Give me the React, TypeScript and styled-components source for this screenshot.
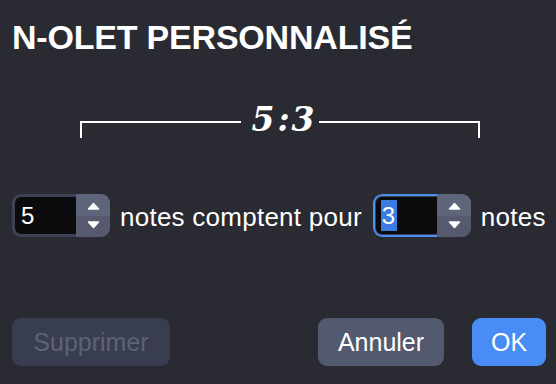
import React from "react";
import styled, { createGlobalStyle } from "styled-components";

const Global = createGlobalStyle`
  html, body { margin: 0; padding: 0; background: #2a2a32; }
  body { font-family: "Liberation Sans", Arial, sans-serif; color: #fff; }
`;

const Dialog = styled.div`
  width: 556px;
  height: 384px;
  box-sizing: border-box;
  padding: 18px 10px 0 12px;
  display: flex;
  flex-direction: column;
`;

const Title = styled.h1`
  margin: 0;
  font-size: 34px;
  line-height: 38px;
  font-weight: 700;
  letter-spacing: -0.2px;
  color: #fff;
`;

const Bracket = styled.div`
  margin: 46px 0 0 68px;
  width: 400px;
  display: flex;
  align-items: flex-start;
`;

const Segment = styled.div<{ $side: "left" | "right" }>`
  flex: 1;
  margin-top: 19px;
  height: 15px;
  border-top: 2px solid #fff;
  ${(p) => (p.$side === "left" ? "border-left: 2px solid #fff;" : "border-right: 2px solid #fff;")}
`;

const Ratio = styled.div`
  padding: 0 4px 0 10px;
  font-family: "DejaVu Serif", "Liberation Serif", serif;
  font-style: italic;
  font-weight: 700;
  font-size: 33px;
  line-height: 36px;
  display: flex;
`;

const Colon = styled.span`
  margin: 0 2px 0 3px;
`;

const Row = styled.div`
  margin-top: 56px;
  display: flex;
  align-items: center;
`;

const Label = styled.span<{ $gap: number }>`
  font-size: 26px;
  letter-spacing: 0.25px;
  line-height: 29px;
  padding-top: 4px;
  margin: 0 ${(p) => p.$gap}px 0 10px;
  color: #fff;
`;

const Spin = styled.div`
  width: 98px;
  height: 43px;
  box-sizing: border-box;
  border-radius: 9px;
  background: #3e4255;
  display: flex;
  overflow: hidden;
  flex-shrink: 0;
`;

const Field = styled.div<{ $focused?: boolean }>`
  width: 64px;
  height: 43px;
  box-sizing: border-box;
  border-radius: 9px 0 0 9px;
  border: 3px solid ${(p) => (p.$focused ? "#4d8ef0" : "#3e4255")};
  border-right: none;
  ${(p) => (p.$focused ? "border-width: 2px; padding: 1px 0 1px 1px; background: #3e4255;" : "")}
  display: flex;
`;

const FieldInner = styled.div`
  flex: 1;
  background: #0b0b0e;
  border-radius: 6px 0 0 6px;
  display: flex;
  align-items: center;
  padding-left: 6px;
  font-size: 24px;
  color: #fff;
`;

const Selected = styled.span`
  background: #3b7ce2;
  display: inline-block;
  line-height: 31px;
  padding: 0 2px 0 1px;
  margin-left: -1px;
`;

const Arrows = styled.div`
  flex: 1;
  display: flex;
  flex-direction: column;
`;

const ArrowCell = styled.div<{ $up?: boolean }>`
  flex: 1;
  display: flex;
  align-items: center;
  justify-content: center;
  background: ${(p) => (p.$up ? "#5e647a" : "#555a6f")};
  padding-left: 1px;
  ${(p) => (p.$up ? "padding-top: 2px;" : "padding-bottom: 2px;")}
`;

const Buttons = styled.div`
  margin-top: 81px;
  display: flex;
  align-items: center;
`;

const Spacer = styled.div`
  flex: 1;
`;

const Button = styled.button<{ $kind: "disabled" | "secondary" | "primary"; $w: number }>`
  width: ${(p) => p.$w}px;
  height: 48px;
  border: none;
  border-radius: 9px;
  font-family: "Liberation Sans", Arial, sans-serif;
  font-size: 25px;
  padding: 0;
  margin-left: ${(p) => (p.$kind === "primary" ? 28 : 0)}px;
  background: ${(p) =>
    p.$kind === "primary" ? "#4a8cf6" : p.$kind === "secondary" ? "#535a70" : "#393d50"};
  color: ${(p) => (p.$kind === "disabled" ? "#5d6275" : "#fff")};
`;

const Tri = ({ up }: { up?: boolean }) => (
  <svg width="13" height="8" viewBox="0 0 13 8">
    <path
      d={up ? "M1.5 7 L6.5 1.5 L11.5 7 Z" : "M1.5 1 L6.5 6.5 L11.5 1 Z"}
      fill="#fff"
      stroke="#fff"
      strokeWidth="1.5"
      strokeLinejoin="round"
    />
  </svg>
);

const SpinBox = ({ value, focused }: { value: string; focused?: boolean }) => (
  <Spin>
    <Field $focused={focused}>
      <FieldInner>{focused ? <Selected>{value}</Selected> : value}</FieldInner>
    </Field>
    <Arrows>
      <ArrowCell $up>
        <Tri up />
      </ArrowCell>
      <ArrowCell>
        <Tri />
      </ArrowCell>
    </Arrows>
  </Spin>
);

export default function App() {
  return (
    <>
      <Global />
      <Dialog>
        <Title>N-OLET PERSONNALISÉ</Title>
        <Bracket>
          <Segment $side="left" />
          <Ratio>
            <span>5</span>
            <Colon>:</Colon>
            <span>3</span>
          </Ratio>
          <Segment $side="right" />
        </Bracket>
        <Row>
          <SpinBox value="5" />
          <Label $gap={11}>notes comptent pour</Label>
          <SpinBox value="3" focused />
          <Label $gap={0}>notes</Label>
        </Row>
        <Buttons>
          <Button $kind="disabled" $w={158} disabled>
            Supprimer
          </Button>
          <Spacer />
          <Button $kind="secondary" $w={126}>
            Annuler
          </Button>
          <Button $kind="primary" $w={74}>
            OK
          </Button>
        </Buttons>
      </Dialog>
    </>
  );
}
